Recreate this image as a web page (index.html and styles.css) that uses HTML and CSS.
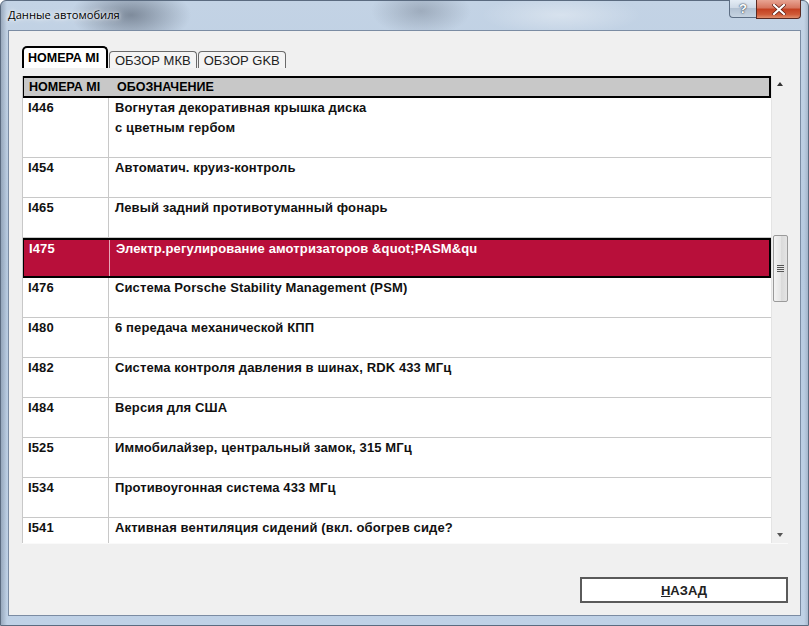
FILE: index.html
```html
<!DOCTYPE html>
<html lang="ru">
<head>
<meta charset="utf-8">
<title>Данные автомобиля</title>
<link rel="stylesheet" href="styles.css">
</head>
<body>
<div class="window">
  <div class="titlebar">
    <span class="title">Данные автомобиля</span>
    <div class="caption-buttons">
      <div class="cap-help">?</div>
      <div class="cap-close">
        <svg width="14" height="11" viewBox="0 0 14 11"><path d="M2 1 L12 10 M12 1 L2 10" stroke="#5a1a10" stroke-width="3.6" stroke-linecap="square"/><path d="M2 1 L12 10 M12 1 L2 10" stroke="#ffffff" stroke-width="2.2" stroke-linecap="square"/></svg>
      </div>
    </div>
  </div>
  <div class="client">
    <div class="tabs">
      <div class="tab tab-active">НОМЕРА МI</div>
      <div class="tab">ОБЗОР МКВ</div>
      <div class="tab">ОБЗОР GKB</div>
    </div>
    <div class="grid">
      <div class="list">
        <div class="row header">
          <div class="c1">НОМЕРА МI</div>
          <div class="c2">ОБОЗНАЧЕНИЕ</div>
        </div>
        <div class="row tall">
          <div class="c1">I446</div>
          <div class="c2">Вогнутая декоративная крышка диска<br>с цветным гербом</div>
        </div>
        <div class="row"><div class="c1">I454</div><div class="c2">Автоматич. круиз-контроль</div></div>
        <div class="row"><div class="c1">I465</div><div class="c2">Левый задний противотуманный фонарь</div></div>
        <div class="row selected"><div class="c1">I475</div><div class="c2">Электр.регулирование амотризаторов &amp;quot;PASM&amp;qu</div></div>
        <div class="row"><div class="c1">I476</div><div class="c2">Система Porsche Stability Management (PSM)</div></div>
        <div class="row"><div class="c1">I480</div><div class="c2">6 передача механической КПП</div></div>
        <div class="row"><div class="c1">I482</div><div class="c2">Система контроля давления в шинах, RDK 433 МГц</div></div>
        <div class="row"><div class="c1">I484</div><div class="c2">Версия для США</div></div>
        <div class="row"><div class="c1">I525</div><div class="c2">Иммобилайзер, центральный замок, 315 МГц</div></div>
        <div class="row"><div class="c1">I534</div><div class="c2">Противоугонная система 433 МГц</div></div>
        <div class="row"><div class="c1">I541</div><div class="c2">Активная вентиляция сидений (вкл. обогрев сиде?</div></div>
      </div>
      <div class="scrollbar">
        <div class="arrow up"></div>
        <div class="track">
          <div class="thumb"><span class="grip"></span></div>
        </div>
        <div class="arrow down"></div>
      </div>
    </div>
    <div class="footer">
      <button class="btn"><span class="u">Н</span>АЗАД</button>
    </div>
  </div>
</div>
</body>
</html>
```
FILE: styles.css
```css
html, body {
  margin: 0;
  padding: 0;
}
body {
  width: 809px;
  height: 626px;
  overflow: hidden;
  font-family: "Liberation Sans", Arial, sans-serif;
}
.window {
  width: 809px;
  height: 626px;
  box-sizing: border-box;
  display: flex;
  flex-direction: column;
  background:
    radial-gradient(ellipse 60px 30px at 130px 14px, rgba(70,80,95,0.55), rgba(70,80,95,0) 100%),
    radial-gradient(ellipse 50px 25px at 420px 10px, rgba(90,100,115,0.35), rgba(90,100,115,0) 100%),
    radial-gradient(ellipse 80px 20px at 560px 14px, rgba(255,255,255,0.35), rgba(255,255,255,0) 100%),
    linear-gradient(to right, rgba(80,95,115,0.35) 0, rgba(80,95,115,0) 6px, rgba(80,95,115,0) 803px, rgba(80,95,115,0.3) 809px),
    linear-gradient(to bottom, #c3d3e5 0%, #b6c9df 40%, #bfd1e6 100%);
  border: 1px solid #5b6b80;
  border-radius: 6px 6px 0 0;
}
.titlebar {
  height: 29px;
  flex: none;
  display: flex;
  align-items: flex-start;
  justify-content: space-between;
}
.title {
  font-family: "Open Sans", "Noto Sans", sans-serif;
  font-size: 11.2px;
  color: #000;
  margin: 6px 0 0 7px;
  text-shadow: 0 0 6px rgba(255,255,255,0.9), 0 0 3px rgba(255,255,255,0.9);
}
.caption-buttons {
  display: flex;
  margin-right: 7px;
  margin-top: -1px;
}
.cap-help {
  width: 27px;
  height: 18px;
  box-sizing: border-box;
  border: 1px solid #5d6e84;
  border-top: none;
  border-right: none;
  border-radius: 0 0 0 4px;
  background: linear-gradient(to bottom, #e4ecf5 0%, #cfdae7 45%, #b3c2d3 50%, #c6d3e1 100%);
  font-family: "Liberation Sans", sans-serif;
  font-weight: bold;
  font-size: 13px;
  color: #fff;
  text-shadow: 0 0 2px #2c3a4c, 0 0 1px #2c3a4c;
  text-align: center;
  line-height: 17px;
}
.cap-close {
  width: 45px;
  height: 19px;
  box-sizing: border-box;
  border: 1px solid #5a2a22;
  border-top: none;
  border-radius: 0 0 4px 0;
  background: linear-gradient(to bottom, #e8a493 0%, #d6745d 45%, #c33f20 50%, #cf5a37 80%, #e08d6b 100%);
  display: flex;
  align-items: center;
  justify-content: center;
}
.client {
  flex: 1;
  margin: 0 7px 9px 7px;
  background: #f0f0f0;
  border: 1px solid #7b8ca3;
  display: flex;
  flex-direction: column;
  padding: 15px 12px 0 13px;
}
.tabs {
  display: flex;
  align-items: flex-end;
  height: 22px;
}
.tab {
  box-sizing: border-box;
  height: 17px;
  padding: 0 5px 0 5px;
  border: 1px solid #6a6a6a;
  border-bottom: none;
  border-radius: 4px 4px 0 0;
  background: #f4f4f4;
  font-size: 13px;
  line-height: 17px;
  color: #222;
  margin-right: 1px;
}
.tab-active {
  height: 22px;
  width: 86px;
  border: 2px solid #000;
  border-bottom: none;
  border-radius: 5px 5px 0 0;
  background: #fff;
  font-weight: bold;
  font-size: 12.5px;
  line-height: 20px;
  color: #000;
  padding: 0 0 0 4px;
}
.grid {
  margin-top: 8px;
  height: 467px;
  width: 766px;
  display: flex;
  background: #fff;
  overflow: hidden;
  border-bottom: 1px solid #fafafa;
}
.list {
  flex: 1;
  overflow: hidden;
  border-left: 1px solid #c8c8c8;
}
.row {
  display: flex;
  height: 40px;
  box-sizing: border-box;
  border-bottom: 1px solid #c8c8c8;
  font-size: 13px;
  font-weight: bold;
  line-height: 20px;
  letter-spacing: 0.12px;
  color: #111;
}
.row.tall {
  height: 60px;
}
.c1 {
  width: 86px;
  flex: none;
  box-sizing: border-box;
  padding-left: 5px;
  border-right: 1px solid #c8c8c8;
}
.c2 {
  padding-left: 6px;
  white-space: nowrap;
}
.row.header {
  height: 22px;
  background: #c8c8c8;
  border: 2px solid #000;
  border-left: 1px solid #000;
  font-size: 12.5px;
  line-height: 18px;
  letter-spacing: 0;
  color: #000;
}
.row.header .c1 {
  border-right: none;
  width: 87px;
}
.row.selected {
  background: #b80f3a;
  color: #fff;
  border: 2px solid #000;
  border-left: 1px solid #000;
  line-height: 18px;
}
.row.selected .c1 {
  border-right: 1px solid #e8a8b8;
}
.scrollbar {
  width: 17px;
  flex: none;
  display: flex;
  flex-direction: column;
  background: #f0f0f0;
  border-left: 1px solid #e4e4e4;
  box-sizing: border-box;
}
.arrow {
  height: 17px;
  flex: none;
  display: flex;
  align-items: center;
  justify-content: center;
}
.arrow.up::before {
  content: "";
  border-left: 3.5px solid transparent;
  border-right: 3.5px solid transparent;
  border-bottom: 4px solid #333;
  margin-top: -2px;
}
.arrow.down::before {
  content: "";
  border-left: 3.5px solid transparent;
  border-right: 3.5px solid transparent;
  border-top: 4px solid #555;
}
.track {
  flex: 1;
  padding-top: 142px;
  display: flex;
  justify-content: center;
}
.thumb {
  width: 15px;
  height: 67px;
  box-sizing: border-box;
  border: 1px solid #9a9a9a;
  border-radius: 2px;
  background: linear-gradient(to right, #f3f3f3 0%, #e6e6e6 50%, #d9d9d9 51%, #e4e4e4 100%);
  display: flex;
  align-items: center;
  justify-content: center;
}
.grip {
  width: 7px;
  height: 7px;
  background: repeating-linear-gradient(to bottom, #555 0, #555 1px, #e8e8e8 1px, #e8e8e8 2px);
}
.footer {
  display: flex;
  justify-content: flex-end;
  margin-top: 33px;
}
.btn {
  width: 208px;
  height: 26px;
  box-sizing: border-box;
  border: 2px solid #5a5a5a;
  background: #fff;
  font-family: "Liberation Sans", Arial, sans-serif;
  font-weight: bold;
  font-size: 13px;
  color: #222;
  padding: 0;
  margin: 0;
}
.u {
  text-decoration: underline;
}
```
